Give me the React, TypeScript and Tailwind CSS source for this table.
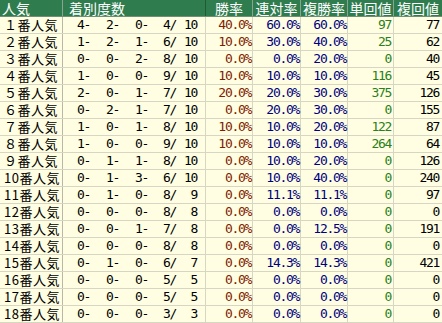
import React from "react";

type Row = [string, string, string, string, string, string, string, string, string, string, string];

const rows: Row[] = [
  ["１番人気", "4", "2", "0", "4", "10", "40.0%", "60.0%", "60.0%", "97", "77"],
  ["２番人気", "1", "2", "1", "6", "10", "10.0%", "30.0%", "40.0%", "25", "62"],
  ["３番人気", "0", "0", "2", "8", "10", "0.0%", "0.0%", "20.0%", "0", "40"],
  ["４番人気", "1", "0", "0", "9", "10", "10.0%", "10.0%", "10.0%", "116", "45"],
  ["５番人気", "2", "0", "1", "7", "10", "20.0%", "20.0%", "30.0%", "375", "126"],
  ["６番人気", "0", "2", "1", "7", "10", "0.0%", "20.0%", "30.0%", "0", "155"],
  ["７番人気", "1", "0", "1", "8", "10", "10.0%", "10.0%", "20.0%", "122", "87"],
  ["８番人気", "1", "0", "0", "9", "10", "10.0%", "10.0%", "10.0%", "264", "64"],
  ["９番人気", "0", "1", "1", "8", "10", "0.0%", "10.0%", "20.0%", "0", "126"],
  ["10番人気", "0", "1", "3", "6", "10", "0.0%", "10.0%", "40.0%", "0", "240"],
  ["11番人気", "0", "1", "0", "8", "9", "0.0%", "11.1%", "11.1%", "0", "97"],
  ["12番人気", "0", "0", "0", "8", "8", "0.0%", "0.0%", "0.0%", "0", "0"],
  ["13番人気", "0", "0", "1", "7", "8", "0.0%", "0.0%", "12.5%", "0", "191"],
  ["14番人気", "0", "0", "0", "8", "8", "0.0%", "0.0%", "0.0%", "0", "0"],
  ["15番人気", "0", "1", "0", "6", "7", "0.0%", "14.3%", "14.3%", "0", "421"],
  ["16番人気", "0", "0", "0", "5", "5", "0.0%", "0.0%", "0.0%", "0", "0"],
  ["17番人気", "0", "0", "0", "5", "5", "0.0%", "0.0%", "0.0%", "0", "0"],
  ["18番人気", "0", "0", "0", "3", "3", "0.0%", "0.0%", "0.0%", "0", "0"],
];

const jp = { fontFamily: '"Noto Sans CJK JP", "DejaVu Sans", sans-serif' };
const mono = { fontFamily: '"DejaVu Sans Mono", "Liberation Mono", monospace', letterSpacing: "-1.3px" };

export default function App() {
  return (
    <div className="w-[442px] h-[323px] bg-[#fffee2] overflow-hidden">
      <div className="flex h-[17px] bg-[#2f7d4e] text-white text-[14px] leading-[16px] border-b border-[#6f8f76]" style={jp}>
        <div className="w-[63px] shrink-0 border-r border-[#8aa290] pl-[2px] flex items-center">人気</div>
        <div className="w-[143px] shrink-0 border-r border-[#1d5a35] pl-[6px] flex items-center">着別度数</div>
        <div className="w-[47px] shrink-0 border-r border-[#8aa290] flex items-center justify-center">勝率</div>
        <div className="w-[48px] shrink-0 border-r border-[#8aa290] flex items-center justify-center">連対率</div>
        <div className="w-[47px] shrink-0 border-r border-[#8aa290] flex items-center justify-center">複勝率</div>
        <div className="w-[46px] shrink-0 border-r border-[#8aa290] flex items-center justify-center">単回値</div>
        <div className="w-[48px] shrink-0 flex items-center justify-center">複回値</div>
      </div>
      {rows.map((r, i) => (
        <div key={i} className="flex h-[17px] border-b border-[#d6d6c2] text-[13px] leading-[16px] text-black">
          <div className="w-[63px] shrink-0 border-r border-[#b8b8a8] pl-[4px] tracking-[0.5px]" style={jp}>
            {r[0]}
          </div>
          <div className="w-[143px] shrink-0 border-r border-[#d6d6c2] flex" style={mono}>
            <span className="w-[27px] text-right">{r[1]}-</span>
            <span className="w-[29px] text-right">{r[2]}-</span>
            <span className="w-[29px] text-right">{r[3]}-</span>
            <span className="w-[28px] text-right">{r[4]}/</span>
            <span className="w-[21px] text-right">{r[5]}</span>
          </div>
          <div className="w-[47px] shrink-0 border-r border-[#d6d6c2] text-right pr-[1px] text-[#802000]" style={mono}>
            {r[6]}
          </div>
          <div className="w-[48px] shrink-0 border-r border-[#d6d6c2] text-right pr-[1px] text-[#000080]" style={mono}>
            {r[7]}
          </div>
          <div className="w-[47px] shrink-0 border-r border-[#d6d6c2] text-right pr-[1px] text-[#000080]" style={mono}>
            {r[8]}
          </div>
          <div className="w-[46px] shrink-0 border-r border-[#d6d6c2] text-right pr-[2px] text-[#2a8020]" style={mono}>
            {r[9]}
          </div>
          <div className="w-[48px] shrink-0 text-right pr-[3px]" style={mono}>
            {r[10]}
          </div>
        </div>
      ))}
    </div>
  );
}
